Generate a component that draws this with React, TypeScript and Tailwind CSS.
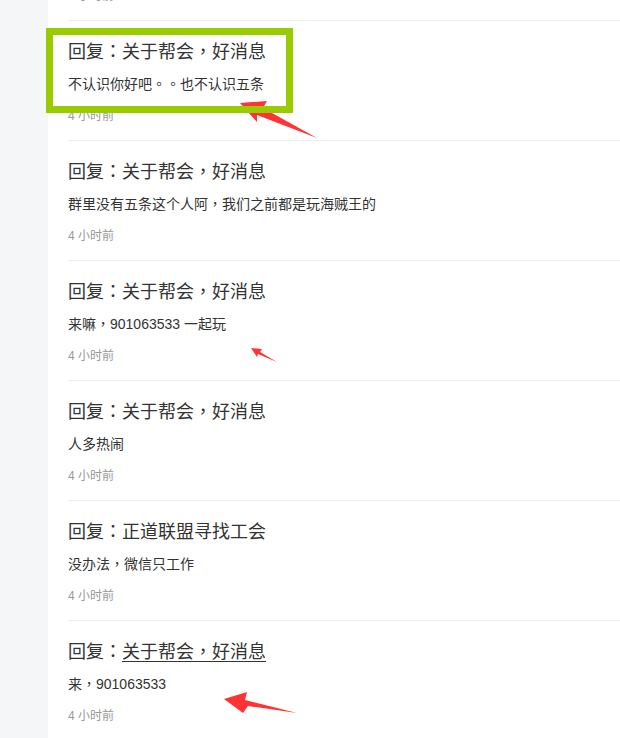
import React from "react";

type Item = { body: string; title?: string; underline?: boolean };

const items: Item[] = [
  { body: "不认识你好吧。。也不认识五条" },
  { body: "群里没有五条这个人阿，我们之前都是玩海贼王的" },
  { body: "来嘛，901063533 一起玩" },
  { body: "人多热闹" },
  { body: "没办法，微信只工作", title: "正道联盟寻找工会" },
  { body: "来，901063533", underline: true },
];

function P({ text }: { text: string }) {
  const parts = text.split(/([，。：])/);
  return (
    <>
      {parts.map((p, i) =>
        /^[，。：]$/.test(p) ? (
          <span key={i} className="leading-none" style={{ fontFamily: '"Noto Sans CJK TC", sans-serif' }}>
            {p}
          </span>
        ) : (
          <React.Fragment key={i}>{p}</React.Fragment>
        )
      )}
    </>
  );
}

function Row({ item }: { item: Item }) {
  return (
    <div className="h-[120px] shrink-0 border-t border-[#eeeeee] pt-[19px]">
      <div className="h-[24px] text-[18px] leading-[24px] text-[#333333] whitespace-nowrap">
        <P text="回复：" />
        <span className={item.underline ? "underline underline-offset-[3px] decoration-1" : ""}>
          <P text={item.title ?? "关于帮会，好消息"} />
        </span>
      </div>
      <div className="mt-[10px] h-[20px] text-[14px] leading-[20px] text-[#333333] whitespace-nowrap">
        <P text={item.body} />
      </div>
      <div className="mt-[14px] h-[16px] text-[12px] leading-[16px] text-[#999999]">4 小时前</div>
    </div>
  );
}

export default function App() {
  return (
    <div
      className="relative w-[620px] h-[738px] overflow-hidden bg-white flex"
      style={{ fontFamily: '"Liberation Sans", "Noto Sans CJK SC", sans-serif' }}
    >
      <div className="w-[48px] shrink-0 bg-[#f5f6f8]" />
      <div className="flex-1 pl-[20px] flex flex-col">
        <div className="h-[20px] shrink-0 overflow-hidden">
          <div className="mt-[-12px] h-[16px] text-[12px] leading-[16px] text-[#999999]">4 小时前</div>
        </div>
        {items.map((it, i) => (
          <Row key={i} item={it} />
        ))}
      </div>

      <svg className="absolute left-0 top-0 z-10" width="620" height="738" viewBox="0 0 620 738">
        <polygon points="240,103 267,101 263,108 317,138 257,115 257,122" fill="#ff3333" />
        <polygon points="251,348 262,349 260,352 277,362 258,354 257,357" fill="#ff3333" />
        <polygon points="224,699 247,692 245,700 297,713 248,706 243,713" fill="#ff3333" />
      </svg>

      <div className="absolute left-[46px] top-[28px] w-[247px] h-[85px] border-[7px] border-[#99cc00] z-20" />
    </div>
  );
}
